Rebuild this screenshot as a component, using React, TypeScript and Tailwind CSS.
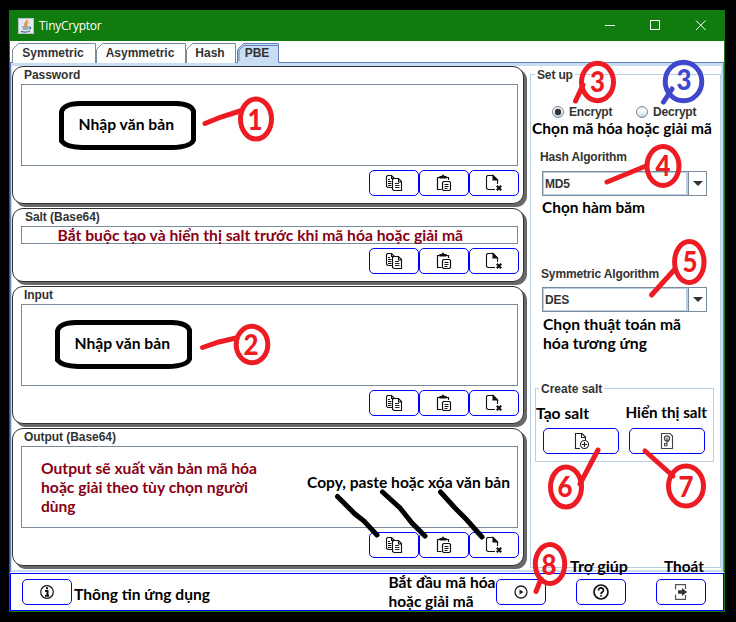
import React from "react";

const INK = "#333333";

function Copy() {
  return (
    <svg width="18" height="18" viewBox="0 0 18 18" fill="none" stroke="#111" strokeWidth="1.1">
      <path d="M7.5 13.5H3L1.5 12.5V2.5L2.5 1.5H6.5L9.5 4.5M6.5 1.5V4.5H8" />
      <path d="M3 5.5H5M3 7.5H6.5M3 9.5H6.5M3 11.5H6.5" />
      <path d="M8.5 4.5H13.5L16.5 7.5V16.5H9L7.5 15.5V5.5ZM13.5 4.5V8H16.5" fill="#fff" />
      <path d="M10 9.5H14M10 11.500H14.5M10 13.500H14.5" strokeWidth="0.9" />
    </svg>
  );
}

function Paste() {
  return (
    <svg width="18" height="18" viewBox="0 0 18 18" fill="none" stroke="#111" strokeWidth="1.2">
      <path d="M5 3.5H2.5V15.5H6.5M11 3.5H13.5V6" />
      <path d="M5 4V2.5H7L8 1.3L9 2.5H11V4Z" fill="#111" />
      <path d="M8.5 7.5H14.5L15.5 8.5V15.5L14.5 16.5H8.5L7.5 15.5V8.5Z" />
      <path d="M9.5 10.5H13.5M9.5 12.5H13.5M9.5 14.5H12.5" strokeWidth="1" />
    </svg>
  );
}

function Clear() {
  return (
    <svg width="18" height="18" viewBox="0 0 18 18" fill="none" stroke="#111" strokeWidth="1.1">
      <path d="M10 15.5H3L1.5 14.5V2.5L2.5 1.5H8L12.5 6V10" />
      <path d="M8 1.5L12.5 6H8Z" fill="#111" />
      <path d="M11.8 11.8L16.2 16.2M16.2 11.8L11.8 16.2" strokeWidth="2.2" />
    </svg>
  );
}

function JavaLogo() {
  return (
    <svg width="16" height="16" viewBox="0 0 16 16" fill="none">
      <rect x="0.5" y="0.5" width="15" height="15" fill="#e4e8ec" stroke="#b8c2cc" />
      <path d="M8.8 1.8C10 4 5 5 7.3 8M10.5 4.2C7.5 5.4 9.5 6.5 8.3 8.2" stroke="#e8791e" strokeWidth="1.2" />
      <path d="M4 9H10.5M4.7 11H10M3 13.4C6 14.3 10 14 12 13M10.8 9C13.5 8.7 13 11 10.8 11.3" stroke="#4c7192" strokeWidth="1.1" />
    </svg>
  );
}

function Btn({ w, children }: { w: string; children: React.ReactNode }) {
  return (
    <button className={`${w} h-[26px] shrink-0 rounded-[5px] border border-[#0000ff] bg-white flex items-center justify-center`}>
      {children}
    </button>
  );
}

function Card({ title, area, pad = "pl-[11px]" }: { title: string; area: string; pad?: string }) {
  return (
    <section className="w-[512px] rounded-[11px] border border-[#333] bg-white shadow-[3px_3px_0_#696969] flex flex-col pb-[7px]">
      <h2 className={`h-[17px] ${pad} text-[12px] leading-[17px] font-bold tracking-[-0.05px]`}>{title}</h2>
      <div className={`ml-2 w-[497px] ${area} border border-[#7a8a99]`} />
      <div className="mt-1 flex justify-end pr-1">
        <Btn w="w-[50px]"><Copy /></Btn>
        <Btn w="w-[50px]"><Paste /></Btn>
        <Btn w="w-[50px]"><Clear /></Btn>
      </div>
    </section>
  );
}

function Tab({ label, w, active = false }: { label: string; w: number; active?: boolean }) {
  return (
    <div className="relative h-[20px] flex justify-center" style={{ width: w }}>
      <svg className="absolute inset-0" width={w} height="20" fill="none">
        <path
          d={`M0.5 20V6.5L6.5 0.5H${w - 0.5}V20`}
          fill={active ? "#c8ddf2" : "#fff"}
          stroke={active ? "#6382bf" : "#7a8a99"}
        />
        {active && <path d={`M2 18V7L7 2.5H${w - 1}`} stroke="#6382bf" />}
      </svg>
      <span className="relative text-[12px] leading-[21px] font-bold whitespace-nowrap -left-px">{label}</span>
    </div>
  );
}

function Radio({ label, on = false }: { label: string; on?: boolean }) {
  return (
    <div className="flex w-[84px] items-center gap-[5px]">
      <svg width="12" height="12" viewBox="0 0 12 12">
        <defs>
          <linearGradient id="rg" x1="0" y1="0" x2="0" y2="1">
            <stop offset="0" stopColor="#dde8f3" />
            <stop offset="0.4" stopColor="#ffffff" />
            <stop offset="1" stopColor="#b8cfe5" />
          </linearGradient>
        </defs>
        <circle cx="6" cy="6" r="5.5" fill="url(#rg)" stroke="#7a8a99" />
        {on && <circle cx="6" cy="6" r="3.2" fill="#333" />}
      </svg>
      <span className="text-[12px] leading-[14px] tracking-[-0.2px]">{label}</span>
    </div>
  );
}

function Combo({ value }: { value: string }) {
  return (
    <div className="flex h-[25px] w-[165px] border border-[#7a8a99] bg-white">
      <div className="w-[145px] border border-[#b8cfe5] border-r-2 pl-px text-[12px] leading-[23px] tracking-[-0.2px]">{value}</div>
      <div className="flex flex-1 items-center justify-center border-l border-[#7a8a99]">
        <svg width="10" height="5"><path d="M0 0H10L5 5Z" fill="#333" /></svg>
      </div>
    </div>
  );
}

type Note = [string, number, number, number, string?];
const notes: Note[] = [
  ["Nhập văn bản", 78.5, 174, 130],
  ["Nhập văn bản", 74.5, 170, 349],
  ["Bắt buộc tạo và hiển thị salt trước khi mã hóa hoặc giải mã", 57.5, 463, 241, "#880015"],
  ["Output sẽ xuất văn bản mã hóa", 41, 257, 474, "#880015"],
  ["hoặc giải theo tùy chọn người", 41, 248, 493, "#880015"],
  ["dùng", 41, 75.5, 512, "#880015"],
  ["Copy, paste hoặc xóa văn bản", 307, 510, 488],
  ["Thông tin ứng dụng", 74, 210, 600],
  ["Bắt đầu mã hóa", 388.5, 495.5, 588],
  ["hoặc giải mã", 388.5, 473.5, 607],
  ["Trợ giúp", 570, 628, 572],
  ["Thoát", 664, 704, 572],
  ["Chọn mã hóa hoặc giải mã", 532, 712, 134],
  ["Chọn hàm băm", 542, 645, 213],
  ["Chọn thuật toán mã", 543, 681, 330],
  ["hóa tương ứng", 543, 647, 349],
  ["Tạo salt", 536, 589, 419],
  ["Hiển thị salt", 625.5, 707, 418],
];

// label, centre x, centre y, rx, ry, pointer path, digit x, digit baseline
type Mark = [string, number, number, number, number, string, number, number];
const marks: Mark[] = [
  ["1", 256, 119, 15.5, 20, "M205 123.5L221 117L240 111", 255, 130],
  ["2", 252, 344.5, 15.8, 18.2, "M202.5 347.5L219 342L236 338", 251, 355],
  ["3", 597.5, 82, 16, 18.7, "M575.5 101L583 85", 597.5, 91.5],
  ["3", 683.5, 81.5, 18.3, 19.3, "M663.5 102L672 89", 684, 89.5],
  ["4", 663, 166, 16, 19.5, "M607 182L646 166", 663, 175.5],
  ["5", 689.3, 262, 14.7, 20.5, "M651.5 295L675 269", 690, 271.5],
  ["6", 566, 487, 15.5, 20, "M598 450L590 465L580 484", 565, 496.5],
  ["7", 686, 486, 17.5, 20, "M645 451L673 476", 686, 496.5],
  ["8", 550, 564, 14.7, 19.5, "M536 591.5L541 579", 549, 574.5],
];

function Annotations() {
  return (
    <svg className="absolute left-0 top-0" width="736" height="622" fill="none" fontFamily="Lato, Carlito, sans-serif" fontWeight="bold">
      {notes.map(([t, x1, x2, y, c]) => (
        <text key={t + y} x={x1} y={y} textLength={x2 - x1} lengthAdjust="spacingAndGlyphs" fontSize="14.8" fill={c ?? "#000"}>{t}</text>
      ))}
      <g stroke="#000" strokeWidth="5" strokeLinecap="round">
        <path d="M61.5 112Q63 104 80 103.5H176Q191 104 193.5 111V140Q191 147 172 147.5H82Q66 147 61.5 141Z" />
        <path d="M57.5 331Q59 323 76 322.5H172Q187 323 189.500 330V359Q187 366 168 366.500H78Q62 366 57.500 360Z" />
        <path d="M337.5 496.500L355 514L364 521L377 535" />
        <path d="M382.500 492L400 508L412 523L425 536" />
        <path d="M440.500 492L455 508L466 519L482 537" />
      </g>
      {marks.map(([n, cx, cy, rx, ry, d, tx, ty], i) => {
        const color = i === 3 ? "#3f48cc" : "#ed1c24";
        return (
          <g key={i} stroke={color} strokeWidth="5" strokeLinecap="round">
            <path d={d} />
            <ellipse cx={cx} cy={cy} rx={rx} ry={ry} />
            <text x={tx} y={ty} fontSize="27.5" textAnchor="middle" stroke="none" fill={color} fontWeight="900" textLength="15" lengthAdjust="spacingAndGlyphs">{n}</text>
          </g>
        );
      })}
    </svg>
  );
}

export default function App() {
  return (
    <div className="relative h-[622px] w-[736px] overflow-hidden bg-black pl-[9px] pt-[10px]" style={{ color: INK, fontFamily: '"Liberation Sans", Arial, sans-serif' }}>
      <main className="flex h-[602px] w-[716px] flex-col border border-[#157a15] bg-white">
        <header className="flex h-[30px] items-center bg-[#107c10] pl-2 text-white">
          <JavaLogo />
          <span className="ml-[5px] flex-1 font-['Open_Sans',sans-serif] text-[12px] tracking-[-0.25px]">TinyCryptor</span>
          <svg width="103" height="12" fill="none" stroke="#fff" className="mr-4">
            <path d="M0 5.500H10M45.500 0.500H54.500V9.500H45.500ZM91 0.500L100.500 10M100.500 0.500L91 10" />
          </svg>
        </header>

        <nav className="flex h-[21px] items-start pl-[2px] pt-[2px]">
          <Tab label="Symmetric" w={84} />
          <Tab label="Asymmetric" w={90} />
          <Tab label="Hash" w={50} />
          <div className="ml-px"><Tab label="PBE" w={42} active /></div>
        </nav>

        <div className="flex h-[510px] border-x border-t border-[#6382bf]">
          <div className="flex w-full border-t-[3px] border-r-2 border-b-2 border-l border-[#c8ddf2]">
            <div className="flex w-[518px] flex-col gap-1">
              <Card title="Password" area="h-[82px]" />
              <Card title="Salt (Base64)" area="h-[18px]" pad="pl-[12px]" />
              <Card title="Input" area="h-[82px]" />
              <Card title="Output (Base64)" area="h-[82px]" />
            </div>
            <fieldset className="mt-[8px] h-[494px] w-[189px] border border-[#b8cfe5]">
              <h2 className="-mt-[7px] ml-1 w-fit bg-white px-[2px] text-[12px] leading-[14px] font-bold tracking-[-0.15px]">Set up</h2>
              <div className="mt-[23px] ml-[21px] flex font-bold">
                <Radio label="Encrypt" on />
                <Radio label="Decrypt" />
              </div>
              <div className="mt-[31px] ml-[9px] text-[12px] leading-[14px] font-bold tracking-[-0.15px]">Hash Algorithm</div>
              <div className="mt-[7px] ml-[11px] font-bold"><Combo value="MD5" /></div>
              <div className="mt-[71px] ml-[10px] text-[12px] leading-[14px] font-bold tracking-[-0.15px]">Symmetric Algorithm</div>
              <div className="mt-[6px] ml-[11px] font-bold"><Combo value="DES" /></div>
              <section className="mt-[76px] ml-[4px] h-[74px] w-[179px] border border-[#b8cfe5]">
                <h3 className="-mt-[7px] ml-[3px] w-fit bg-white px-[2px] text-[12px] leading-[14px] font-bold">Create salt</h3>
                <div className="mt-[32px] ml-[7px] flex gap-[10px]">
                  <Btn w="w-[76px]">
                    <svg width="18" height="18" viewBox="0 0 18 18" fill="none" stroke="#222" strokeWidth="1.1">
                      <path d="M8 16.5H3.500V1.500H10L13.500 5V8M9.500 1.500V5.500H13.500" />
                      <circle cx="12.500" cy="12.500" r="4" /><path d="M12.500 10V15M10 12.500H15" />
                    </svg>
                  </Btn>
                  <Btn w="w-[76px]">
                    <svg width="18" height="18" viewBox="0 0 18 18" fill="none" stroke="#444" strokeWidth="1.1">
                      <path d="M3.500 1.500H12L14.500 4V16.500H3.500Z" />
                      <circle cx="9" cy="6.500" r="2.600" fill="#ddd" /><path d="M9 6V14M9 11.500H6.500V13.800H9M9 9H11" />
                    </svg>
                  </Btn>
                </div>
              </section>
            </fieldset>
          </div>
        </div>

        <footer className="mt-px flex h-[38px] items-center border border-[#0000ff] bg-white pl-[11px]">
          <Btn w="w-[50px]">
            <svg width="14" height="14" viewBox="0 0 14 14" fill="none" stroke="#111">
              <circle cx="7" cy="7" r="6.300" strokeWidth="1.200" />
              <path d="M7 2.300V4.300M5 6H7.500V10.500M5 10.800H9" strokeWidth="2" />
            </svg>
          </Btn>
          <div className="ml-[424px] flex gap-[30px]">
            <Btn w="w-[50px]">
              <svg width="14" height="14" viewBox="0 0 14 14" fill="none" stroke="#222" strokeWidth="1.300">
                <circle cx="7" cy="7" r="6" /><path d="M5.500 4.500V9.500L9.500 7Z" fill="#222" stroke="none" />
              </svg>
            </Btn>
            <Btn w="w-[50px]">
              <svg width="16" height="16" viewBox="0 0 16 16" fill="none" stroke="#111" strokeWidth="1.700">
                <circle cx="8" cy="8" r="7" /><path d="M5.500 6.500C5.500 3 10.500 3.200 10.500 6.200C10.500 8 8 8 8 10M8 11V12.500" />
              </svg>
            </Btn>
            <Btn w="w-[50px]">
              <svg width="16" height="16" viewBox="0 0 16 16" fill="none" stroke="#555" strokeWidth="1.200">
                <path d="M2.500 5.500V0.700H12.500V5M2.500 10.500V15.300H12.500V11" />
                <path d="M5 6.300H9V4L14 8L9 12V9.700H5Z" fill="#333" stroke="none" />
              </svg>
            </Btn>
          </div>
        </footer>
      </main>
      <Annotations />
    </div>
  );
}
